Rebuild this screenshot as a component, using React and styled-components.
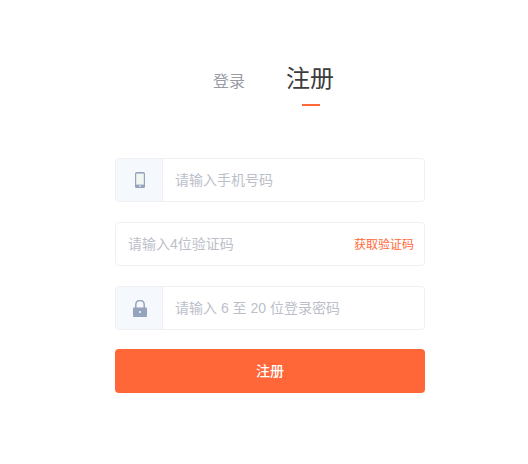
import React from "react";
import styled, { createGlobalStyle } from "styled-components";

const GlobalStyle = createGlobalStyle`
  html, body {
    margin: 0;
    padding: 0;
    background: #fff;
  }
  body {
    font-family: "Liberation Sans", "Noto Sans CJK SC", sans-serif;
  }
`;

const Page = styled.div`
  width: 310px;
  margin: 0 0 0 115px;
  padding-top: 62px;
  height: 402px;
`;

const Tabs = styled.div`
  display: flex;
  justify-content: flex-start;
  align-items: flex-start;
  gap: 41px;
  padding-left: 98px;
  height: 96px;
`;

const Tab = styled.div`
  position: relative;
  font-size: ${(props) => (props.active ? "24px" : "16px")};
  line-height: ${(props) => (props.active ? "34px" : "24px")};
  margin-top: ${(props) => (props.active ? "0" : "8px")};
  color: ${(props) => (props.active ? "#3c3c3c" : "#999ca5")};

  ${(props) =>
    props.active &&
    `
    &::after {
      content: "";
      position: absolute;
      left: 16px;
      top: 42px;
      width: 18px;
      height: 2px;
      background: #ff6738;
    }
  `}
`;

const Form = styled.div`
  display: flex;
  flex-direction: column;
`;

const Field = styled.div`
  display: flex;
  align-items: center;
  box-sizing: border-box;
  height: 44px;
  margin-bottom: ${(props) => props.mb || "20px"};
  border: 1px solid #eef0f3;
  border-radius: 4px;
  overflow: hidden;
  background: #fff;
`;

const IconBox = styled.div`
  display: flex;
  align-items: center;
  justify-content: center;
  flex: none;
  box-sizing: border-box;
  width: 47px;
  height: 100%;
  padding-left: 2px;
  background: #f5f8fc;
  border-right: 1px solid #eef0f3;
`;

const Placeholder = styled.span`
  flex: 1;
  padding-left: 12px;
  padding-bottom: 2px;
  font-size: 14px;
  color: #bcc0c9;
`;

const CodeLink = styled.span`
  margin-right: 10px;
  padding-bottom: 2px;
  font-size: 12px;
  color: #ff6738;
`;

const Submit = styled.button`
  height: 44px;
  padding: 0 0 2px;
  border: none;
  border-radius: 4px;
  background: #ff6738;
  color: #fff;
  font-family: inherit;
  font-size: 14px;
  font-weight: 500;
`;

const PhoneIcon = () => (
  <svg width="10" height="16" viewBox="0 0 10 16">
    <rect x="0" y="0" width="10" height="16" rx="1.5" fill="#95a3bd" />
    <rect x="1.2" y="1.6" width="7.6" height="11" fill="#f1f6f2" />
    <rect x="4" y="13.6" width="2" height="1.1" fill="#f1f6f2" />
  </svg>
);

const LockIcon = () => (
  <svg width="14" height="17" viewBox="0 0 14 17">
    <path d="M2.8 8V4.6a4.2 4.2 0 0 1 8.4 0V8" fill="none" stroke="#95a3bd" strokeWidth="1.5" />
    <rect x="0" y="7.5" width="14" height="9.5" rx="1" fill="#95a3bd" />
    <circle cx="7" cy="12" r="1" fill="#fff" />
  </svg>
);

const App = () => {
  return (
    <Page>
      <GlobalStyle />
      <Tabs>
        <Tab>登录</Tab>
        <Tab active>注册</Tab>
      </Tabs>
      <Form>
        <Field>
          <IconBox>
            <PhoneIcon />
          </IconBox>
          <Placeholder>请输入手机号码</Placeholder>
        </Field>
        <Field>
          <Placeholder>请输入4位验证码</Placeholder>
          <CodeLink>获取验证码</CodeLink>
        </Field>
        <Field mb="19px">
          <IconBox>
            <LockIcon />
          </IconBox>
          <Placeholder>请输入 6 至 20 位登录密码</Placeholder>
        </Field>
        <Submit>注册</Submit>
      </Form>
    </Page>
  );
};

export default App;
